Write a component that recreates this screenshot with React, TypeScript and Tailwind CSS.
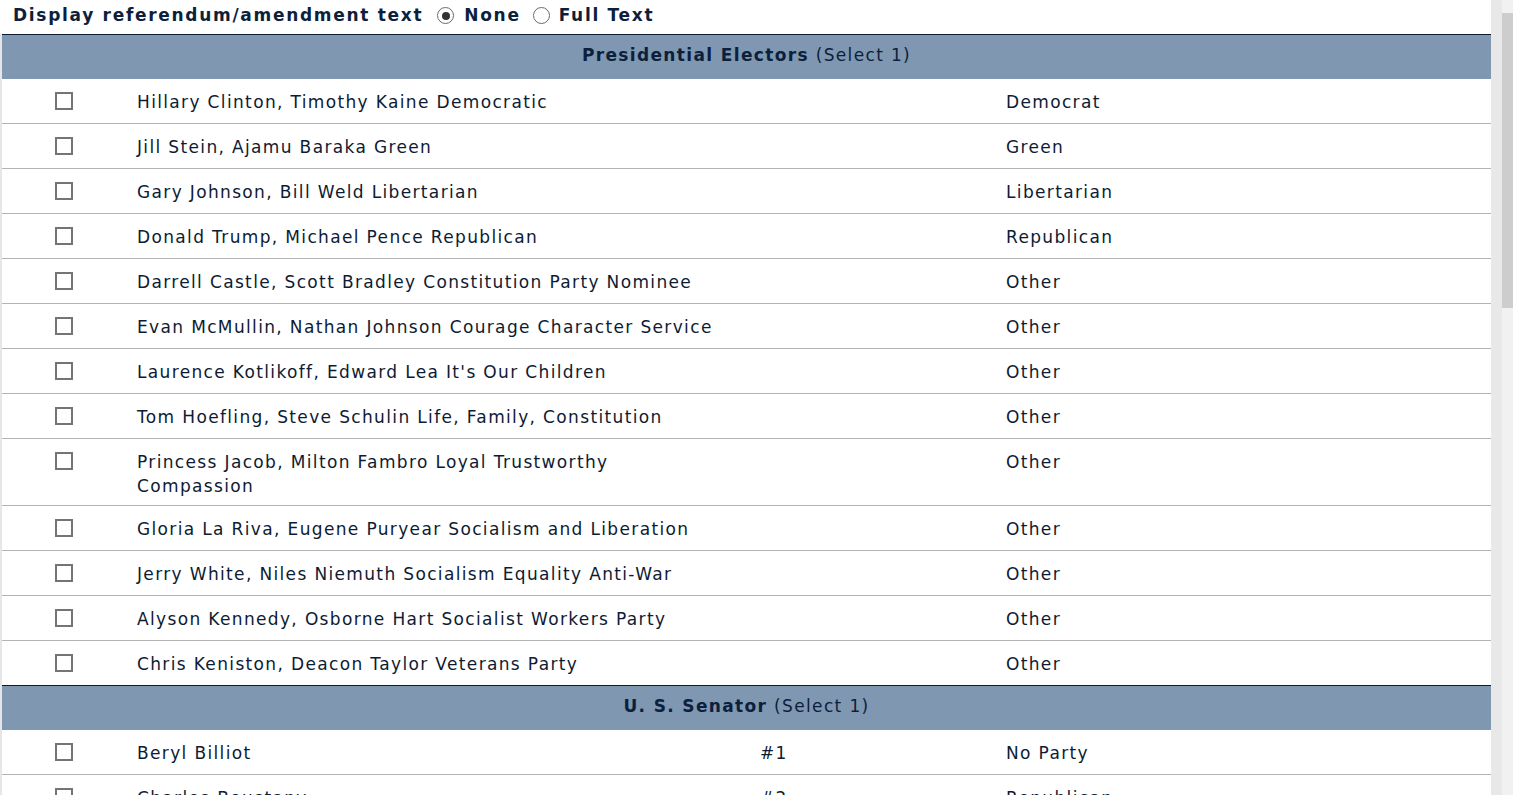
import React from "react";

type Candidate = { name: string; num?: string; party: string };

const electors: Candidate[] = [
  { name: "Hillary Clinton, Timothy Kaine Democratic", party: "Democrat" },
  { name: "Jill Stein, Ajamu Baraka Green", party: "Green" },
  { name: "Gary Johnson, Bill Weld Libertarian", party: "Libertarian" },
  { name: "Donald Trump, Michael Pence Republican", party: "Republican" },
  { name: "Darrell Castle, Scott Bradley Constitution Party Nominee", party: "Other" },
  { name: "Evan McMullin, Nathan Johnson Courage Character Service", party: "Other" },
  { name: "Laurence Kotlikoff, Edward Lea It's Our Children", party: "Other" },
  { name: "Tom Hoefling, Steve Schulin Life, Family, Constitution", party: "Other" },
  { name: "Princess Jacob, Milton Fambro Loyal Trustworthy Compassion", party: "Other" },
  { name: "Gloria La Riva, Eugene Puryear Socialism and Liberation", party: "Other" },
  { name: "Jerry White, Niles Niemuth Socialism Equality Anti-War", party: "Other" },
  { name: "Alyson Kennedy, Osborne Hart Socialist Workers Party", party: "Other" },
  { name: "Chris Keniston, Deacon Taylor Veterans Party", party: "Other" },
];

const senators: Candidate[] = [
  { name: "Beryl Billiot", num: "#1", party: "No Party" },
  { name: "Charles Boustany", num: "#2", party: "Republican" },
];

function Radio({ checked }: { checked?: boolean }) {
  return (
    <span className="inline-flex h-[17px] w-[17px] items-center justify-center rounded-full border border-[#6b6b6b] bg-white">
      {checked && <span className="h-[8px] w-[8px] rounded-full bg-[#333]" />}
    </span>
  );
}

function RaceHeader({ title }: { title: string }) {
  return (
    <div className="flex h-[45px] items-center justify-center border-t border-[#0b1b33] bg-[#7f97b0] pb-[2px] text-[17px] text-[#0c1f3c]">
      <span className="font-bold">{title}</span>
      <span>&nbsp;(Select 1)</span>
    </div>
  );
}

function Row({ c, first }: { c: Candidate; first?: boolean }) {
  return (
    <div
      className={
        "grid grid-cols-[123px_623px_246px_1fr] bg-white pt-[11px] pb-[7px] leading-[24px] " +
        (first ? "min-h-[44px]" : "min-h-[45px] border-t border-[#b4b4b4]")
      }
    >
      <div className="flex justify-center pt-[2px]">
        <span className="block h-[18px] w-[18px] border-2 border-[#747474] bg-white" />
      </div>
      <div className="pl-3 pr-[30px]">{c.name}</div>
      <div className="px-3">{c.num}</div>
      <div className="px-3">{c.party}</div>
    </div>
  );
}

export default function App() {
  return (
    <div className="flex h-[795px] overflow-hidden bg-white font-['DejaVu_Sans',Verdana,sans-serif] text-[17px] tracking-[1.35px] text-[#0d1b33]">
      <div className="flex-1">
        <div className="flex h-[34px] items-center pb-[3px] pl-[13px] text-[17px] font-bold tracking-[1.7px] text-[#0c1f3c]">
          <span>Display referendum/amendment text</span>
          <span className="ml-[14px] flex items-center gap-[10px]">
            <Radio checked />
            <span>None</span>
          </span>
          <span className="ml-[12px] flex items-center gap-[9px]">
            <Radio />
            <span>Full Text</span>
          </span>
        </div>
        <div className="border-l-2 border-[#e6e6e6]">
          <RaceHeader title="Presidential Electors" />
          {electors.map((c, i) => (
            <Row key={c.name} c={c} first={i === 0} />
          ))}
          <RaceHeader title="U. S. Senator" />
          {senators.map((c, i) => (
            <Row key={c.name} c={c} first={i === 0} />
          ))}
        </div>
      </div>
      <div className="w-[11px] bg-[#e8e8e8]" />
      <div className="w-[11px] bg-[#f1f1f1] pt-[13px]">
        <div className="h-[295px] bg-[#cdcdcd]" />
      </div>
    </div>
  );
}
